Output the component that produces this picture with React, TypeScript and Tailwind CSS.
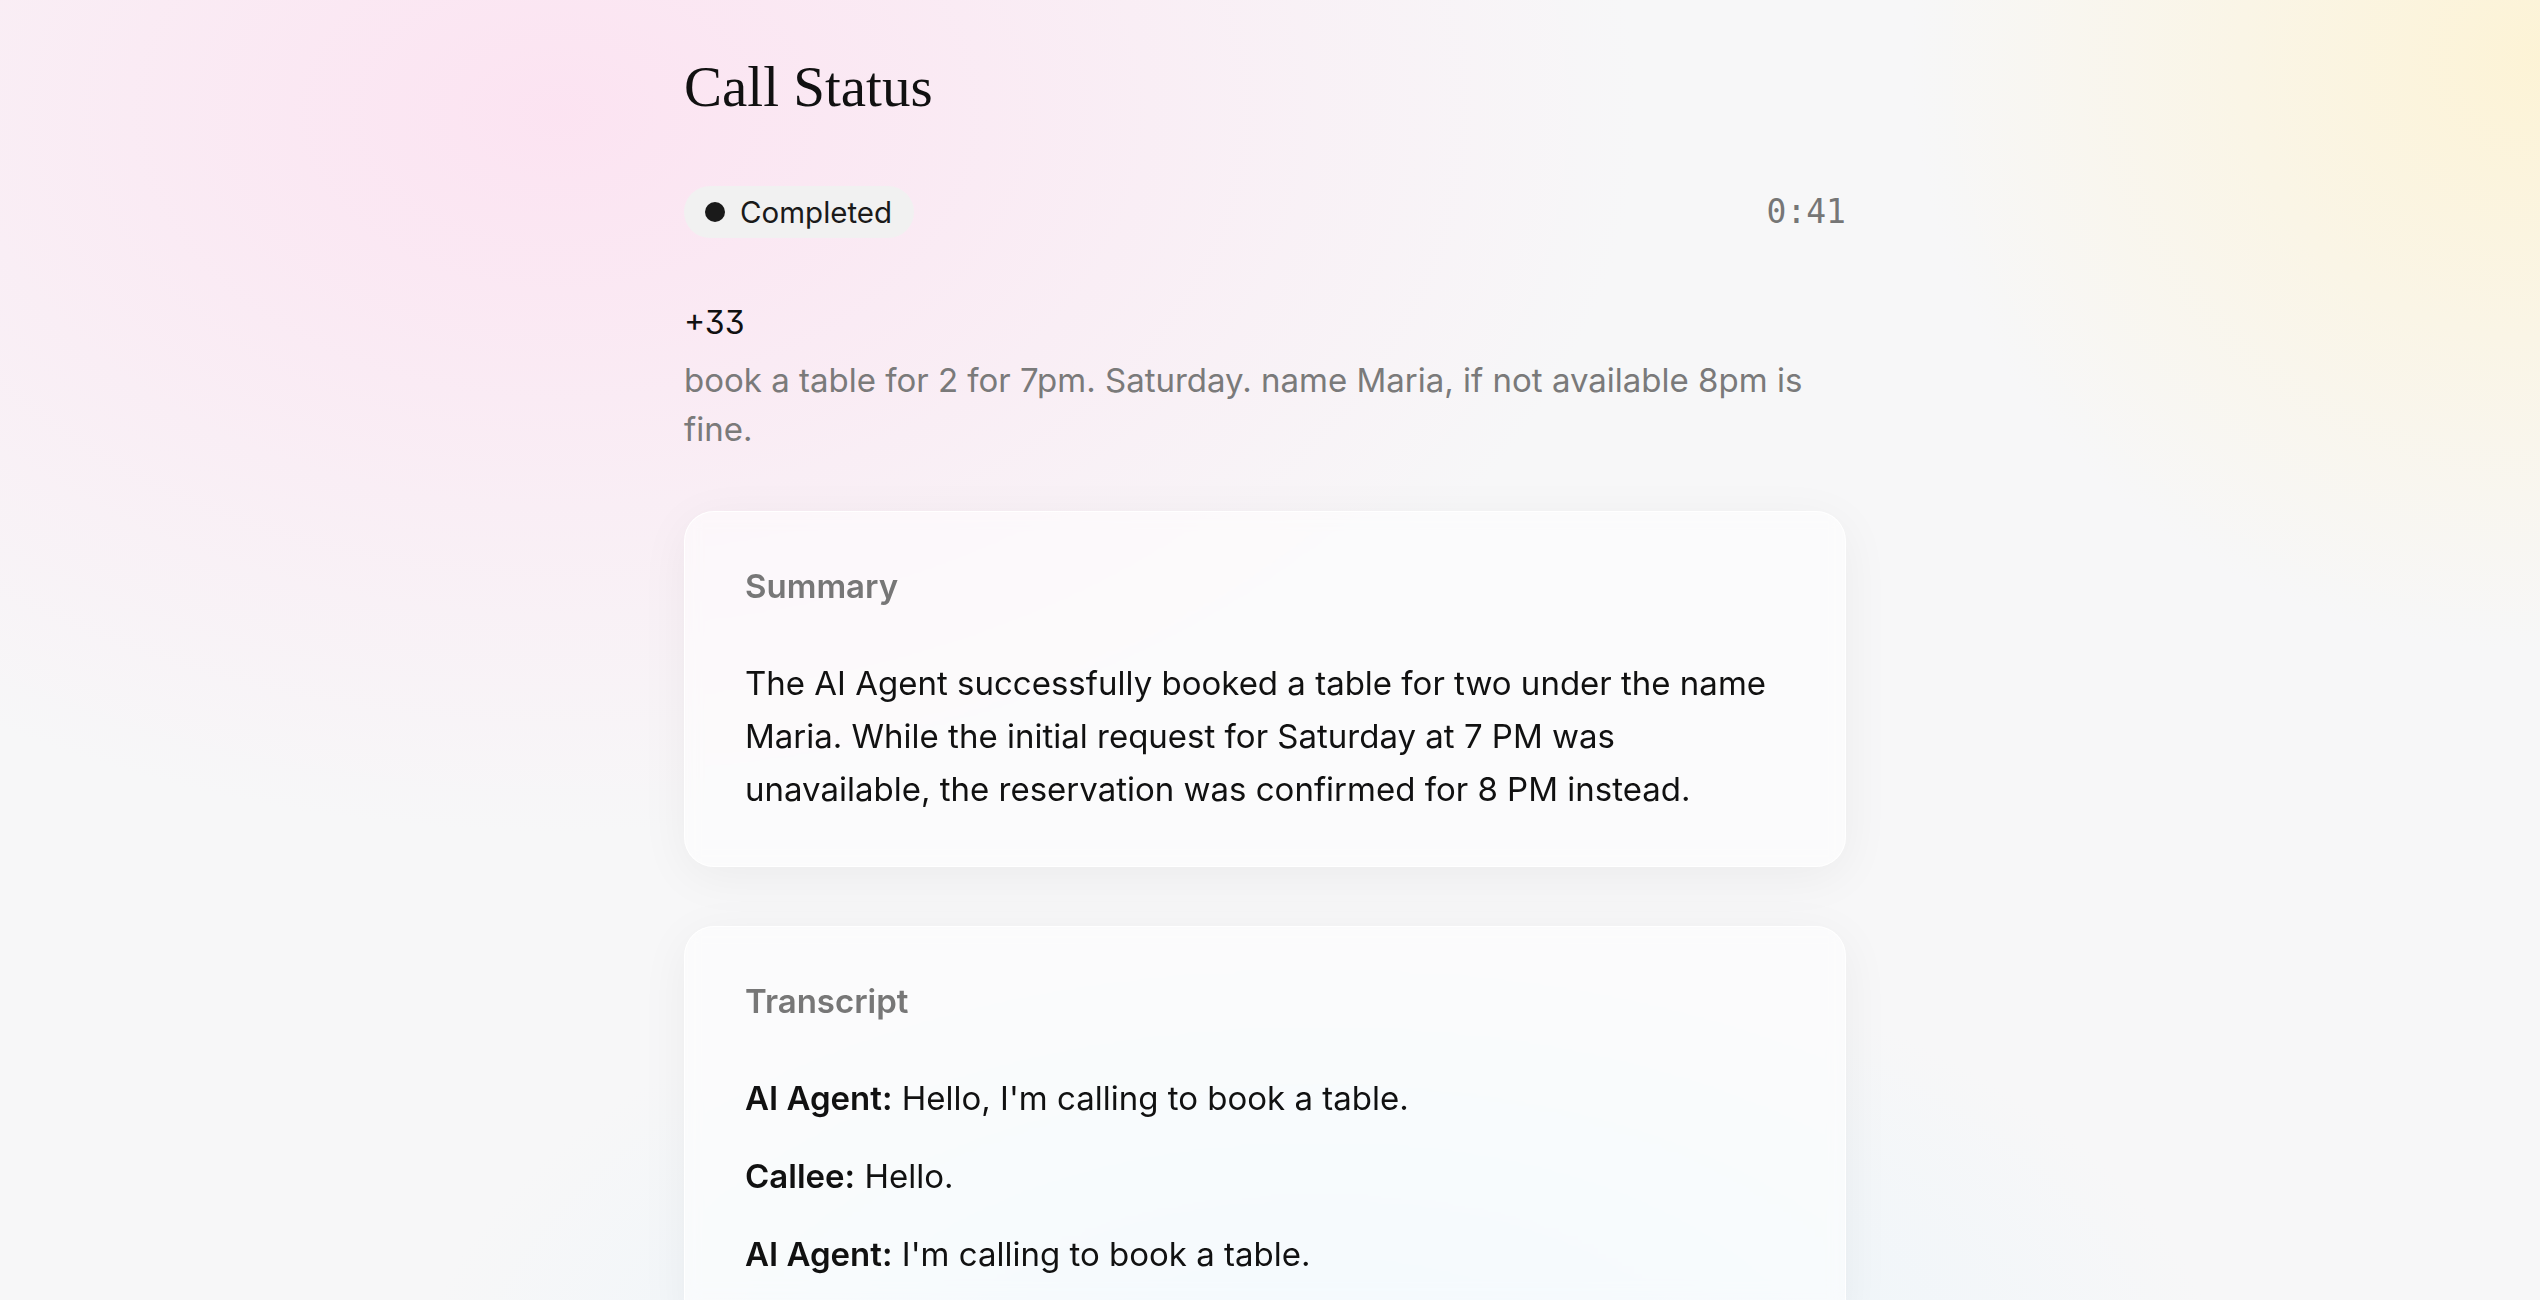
const transcript = [
  { speaker: "AI Agent", text: "Hello, I'm calling to book a table." },
  { speaker: "Callee", text: "Hello." },
  { speaker: "AI Agent", text: "I'm calling to book a table." },
];

const Card = ({ title, children }: { title: string; children: React.ReactNode }) => (
  <div className="rounded-[30px] border border-white/90 bg-white/50 px-[60px] pt-[53px] pb-[50px] shadow-[0_10px_50px_rgba(0,0,0,0.05)] backdrop-blur-sm">
    <h2 className="text-[33px] leading-[42px] font-semibold text-[#777777]">{title}</h2>
    <div className="mt-[50px]">{children}</div>
  </div>
);

export default function App() {
  return (
    <div className="min-h-screen w-full overflow-hidden bg-[#f7f7f8] bg-[image:radial-gradient(1500px_1000px_at_22%_8%,rgba(252,226,241,0.95),transparent_72%),radial-gradient(900px_850px_at_100%_4%,rgba(253,243,212,0.95),transparent_70%),radial-gradient(1300px_700px_at_52%_100%,rgba(230,244,252,1),transparent_70%)] font-['Inter','Liberation_Sans',sans-serif]">
      <div className="mx-auto w-[1172px] pr-[10px] pb-[80px]">
        {/* Title */}
        <h1 className="pt-[58px] font-['Liberation_Serif',serif] text-[57px] leading-none text-[#111111]">
          Call Status
        </h1>

        {/* Status + duration */}
        <div className="mt-[71px] flex items-center justify-between">
          <div className="flex h-[52px] items-center gap-[15px] rounded-full bg-[#f1f1f1] pl-[21px] pr-[22px]">
            <span className="size-[20px] rounded-full bg-[#1a1a1a]" />
            <span className="text-[29.5px] text-[#1a1a1a]">Completed</span>
          </div>
          <span className="font-['DejaVu_Sans_Mono',monospace] text-[33px] text-[#767676]">0:41</span>
        </div>

        {/* Number + request */}
        <div className="mt-[64px] text-[32px] leading-[42px] text-[#111111] [font-feature-settings:'cv09']">+33</div>
        <p className="mt-[12px] text-[33px] leading-[49px] text-[#7a7a7a]">
          book a table for 2 for 7pm. Saturday. name Maria, if not available 8pm is fine.
        </p>

        <div className="mt-[57px] flex flex-col gap-[59px]">
          <Card title="Summary">
            <p className="text-[33px] leading-[53px] text-[#111111]">
              The AI Agent successfully booked a table for two under the name Maria. While the initial
              request for Saturday at 7 PM was unavailable, the reservation was confirmed for 8 PM instead.
            </p>
          </Card>

          <Card title="Transcript">
            <div className="flex flex-col gap-[25px]">
              {transcript.map((line, i) => (
                <p key={i} className="text-[33px] leading-[53px] text-[#111111]">
                  <span className="font-semibold">{line.speaker}:</span> {line.text}
                </p>
              ))}
            </div>
          </Card>
        </div>
      </div>
    </div>
  );
}
